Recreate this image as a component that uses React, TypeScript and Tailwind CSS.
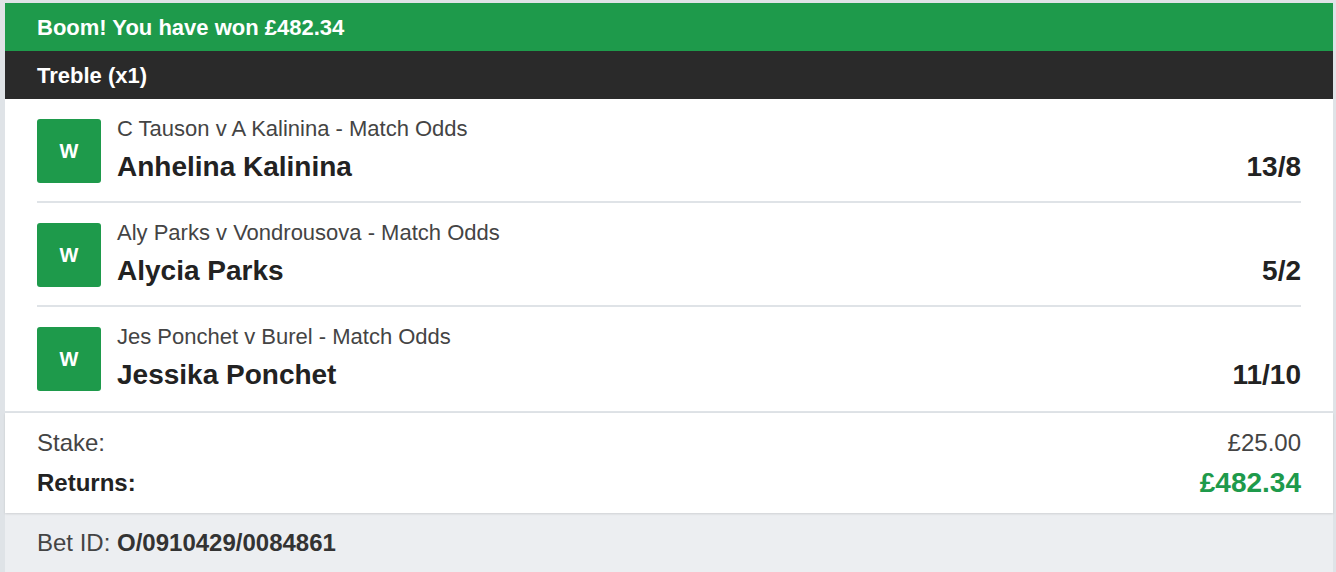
const legs = [
  { market: "C Tauson v A Kalinina - Match Odds", selection: "Anhelina Kalinina", odds: "13/8" },
  { market: "Aly Parks v Vondrousova - Match Odds", selection: "Alycia Parks", odds: "5/2" },
  { market: "Jes Ponchet v Burel - Match Odds", selection: "Jessika Ponchet", odds: "11/10" },
];

function Leg({ market, selection, odds, last }: { market: string; selection: string; odds: string; last: boolean }) {
  return (
    <div className="px-8">
      <div className={`flex items-end gap-4 pt-5 ${last ? "pb-5" : "pb-[18px] border-b-2 border-[#dfe3e7]"}`}>
        <div className="w-16 h-16 rounded-[3px] bg-[#1e9a4b] flex items-center justify-center text-white font-bold text-[20px] shrink-0">
          W
        </div>
        <div className="flex-1 h-16 flex flex-col justify-between">
          <div className="text-[22px] leading-5 text-[#444]">{market}</div>
          <div className="text-[28px] leading-8 font-bold text-[#222]">{selection}</div>
        </div>
        <div className="text-[28px] leading-8 font-bold text-[#222]">{odds}</div>
      </div>
    </div>
  );
}

export default function App() {
  return (
    <div className="min-h-[572px] bg-[#dfe3e7] pl-[5px] pr-[3px] pt-[3px] font-['Liberation_Sans',Arial,sans-serif]">
      <div className="bg-white min-h-[569px] flex flex-col">
        {/* Win banner */}
        <div className="h-12 bg-[#1e9a4b] px-8 flex items-center text-white font-bold text-[22px]">
          Boom! You have won £482.34
        </div>
        <div className="h-12 bg-[#2a2a2a] px-8 flex items-center text-white font-bold text-[22px]">
          Treble (x1)
        </div>

        {/* Legs */}
        <div className="border-b-2 border-[#dfe3e7]">
          {legs.map((leg, i) => (
            <Leg key={leg.selection} {...leg} last={i === legs.length - 1} />
          ))}
        </div>

        {/* Totals */}
        <div className="px-8 pt-4 pb-4 flex flex-col gap-3 shadow-[0_1px_2px_rgba(0,0,0,0.12)] relative">
          <div className="flex justify-between h-7 items-center text-[24px] text-[#444]">
            <span>Stake:</span>
            <span>£25.00</span>
          </div>
          <div className="flex justify-between h-7 items-center">
            <span className="text-[24px] font-bold text-[#222]">Returns:</span>
            <span className="text-[28px] font-bold text-[#1e9a4b]">£482.34</span>
          </div>
        </div>

        {/* Bet id */}
        <div className="flex-1 bg-[#eceef1] px-8 pt-4 text-[24px] leading-7 text-[#444]">
          Bet ID: <span className="font-bold text-[#333]">O/0910429/0084861</span>
        </div>
      </div>
    </div>
  );
}
